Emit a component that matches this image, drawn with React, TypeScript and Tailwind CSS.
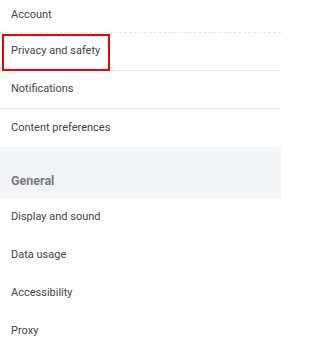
const topItems = ["Notifications", "Content preferences"]
const generalItems = ["Display and sound", "Data usage", "Accessibility", "Proxy"]

function Row({ label, border = true }: { label: string; border?: boolean }) {
  return (
    <div
      className={`flex h-[38px] items-center px-[11px] text-[11px] text-[#444444] ${
        border ? "border-b border-[#e9e9e9]" : ""
      }`}
    >
      {label}
    </div>
  )
}

export default function App() {
  return (
    <div className="h-[347px] w-[281px] overflow-hidden bg-white font-['Roboto',sans-serif]">
      {/* Account row is partly scrolled off */}
      <div className="flex h-[33px] items-center border-b border-dashed border-[#e6e6e6] px-[11px] pb-[1px] text-[11px] text-[#444444]">
        Account
      </div>

      <div className="relative flex h-[38px] items-center border-b border-[#e9e9e9] px-[11px] text-[11px] text-[#444444]">
        <div className="pointer-events-none absolute left-[2px] top-[1px] h-[37px] w-[108px] border-2 border-[#f00000]" />
        Privacy and safety
      </div>

      <Row label={topItems[0]} />
      <Row label={topItems[1]} border={false} />

      {/* Section header */}
      <div className="flex h-[51px] items-end border-b border-dotted border-[#e6e9ee] bg-[#f3f6f9] px-[11px] pb-[6px] text-[12.5px] font-bold text-[#7a7a7a]">
        General
      </div>

      {generalItems.map((item) => (
        <Row key={item} label={item} border={false} />
      ))}
    </div>
  )
}
